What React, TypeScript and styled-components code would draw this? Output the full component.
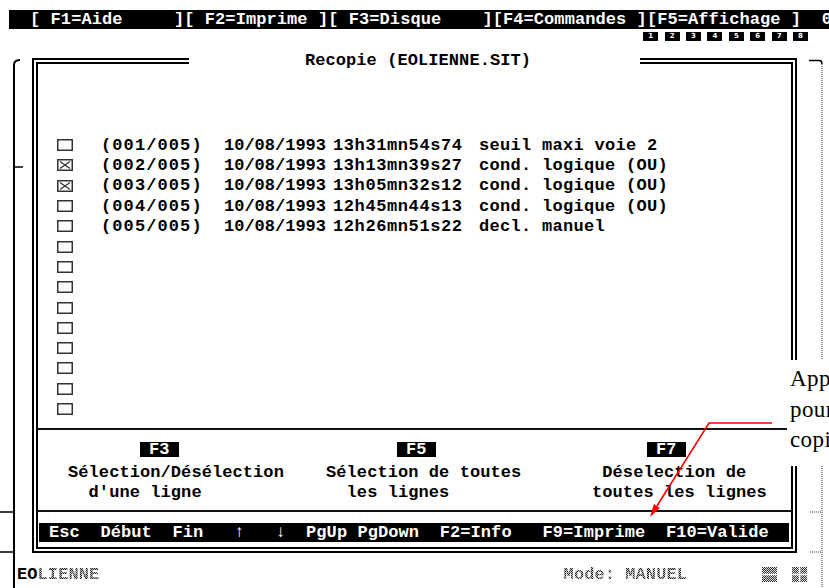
import React from "react";
import styled, { createGlobalStyle } from "styled-components";

const entries = [
  { id: "(001/005)", date: "10/08/1993", time: "13h31mn54s74", label: "seuil maxi voie 2", checked: false },
  { id: "(002/005)", date: "10/08/1993", time: "13h13mn39s27", label: "cond. logique (OU)", checked: true },
  { id: "(003/005)", date: "10/08/1993", time: "13h05mn32s12", label: "cond. logique (OU)", checked: true },
  { id: "(004/005)", date: "10/08/1993", time: "12h45mn44s13", label: "cond. logique (OU)", checked: false },
  { id: "(005/005)", date: "10/08/1993", time: "12h26mn51s22", label: "decl. manuel", checked: false },
];

const rows = [
  ...entries,
  ...Array.from({ length: 9 }, () => ({ id: "", date: "", time: "", label: "", checked: false })),
];

const fnKeys = [
  { key: "F3", indent: 72, lines: ["Sélection/Désélection", "  d'une ligne"] },
  { key: "F5", indent: 71, lines: ["Sélection de toutes", "  les lignes"] },
  { key: "F7", indent: 55, lines: [" Déselection de", "toutes les lignes"] },
];

const GlobalStyle = createGlobalStyle`
  html, body {
    margin: 0;
    padding: 0;
    background: #fff;
    overflow: hidden;
  }
`;

const Screen = styled.div`
  position: relative;
  width: 829px;
  height: 588px;
  overflow: hidden;
  background: #fff;
  color: #000;
  font-family: "Liberation Mono", "DejaVu Sans Mono", monospace;
  font-size: 17px;
  font-weight: bold;
  letter-spacing: 0.08px;
`;

const MenuBar = styled.div`
  margin: 10px 0 0 9px;
  height: 19px;
  line-height: 19px;
  padding-left: 21px;
  background: #000;
  color: #fff;
  white-space: pre;
`;

const ScreenTabs = styled.div`
  display: flex;
  justify-content: flex-end;
  gap: 6.4px;
  margin-top: 3px;
  padding-right: 21px;
`;

const ScreenTab = styled.span`
  width: 15px;
  height: 9px;
  background: #000;
  color: #fff;
  font-family: "DejaVu Sans", sans-serif;
  font-size: 7px;
  line-height: 9px;
  text-align: center;
  letter-spacing: 0;
`;

const Main = styled.div`
  display: flex;
  margin-top: 10px;
`;

const Rail = styled.svg`
  flex: none;
  overflow: visible;
`;

const Center = styled.div`
  flex: none;
  width: 792px;
`;

const Frame = styled.fieldset`
  box-sizing: border-box;
  width: 765px;
  min-width: 0;
  margin: 0 0 0 16px;
  padding: 0;
  border: 6px double #000;
`;

const Title = styled.legend`
  margin: 0 auto;
  padding: 0 109px 0 116px;
  line-height: 19px;
  white-space: pre;
`;

const List = styled.div`
  padding-top: 65px;
`;

const Row = styled.div`
  display: grid;
  grid-template-columns: 44px 123px 109px 146px 1fr;
  align-items: center;
  height: 20.3px;
  padding-left: 19px;
  white-space: pre;

  svg {
    display: block;
  }
`;

const Cell = styled.span<{ $track: number }>`
  letter-spacing: ${(p) => p.$track}px;
`;

const Divider = styled.div<{ $gap: number }>`
  height: 2px;
  margin-top: ${(p) => p.$gap}px;
  background: #111;
`;

const FnRow = styled.div`
  display: grid;
  grid-template-columns: 258px 266px 1fr;
  padding: 12px 0 7px 30px;
`;

const FnBlock = styled.div`
  display: flex;
  flex-direction: column;
  align-items: flex-start;
`;

const KeyCap = styled.span<{ $indent: number }>`
  margin-left: ${(p) => p.$indent}px;
  height: 15px;
  line-height: 15px;
  padding: 0 9px;
  background: #000;
  color: #fff;
`;

const FnText = styled.div`
  margin-top: 6px;
  line-height: 20px;
  white-space: pre;
`;

const KeyBar = styled.div`
  margin: 11px 2px 5px 1px;
  height: 19px;
  line-height: 19px;
  padding-left: 10px;
  background: #000;
  color: #fff;
  white-space: pre;
`;

const StatusBar = styled.div`
  display: flex;
  align-items: center;
  height: 20px;
  margin-top: 11px;
  padding: 0 1px 0 1px;
  white-space: pre;
`;

const Dither = styled.span`
  color: transparent;
  background: repeating-conic-gradient(#222 0% 25%, #bbb 0% 50%) 0 0 / 2px 2px;
  -webkit-background-clip: text;
  background-clip: text;
`;

const Mode = styled(Dither)`
  margin-left: auto;
`;

const Indicators = styled.div`
  display: flex;
  gap: 15px;
  margin-left: 75px;

  svg {
    display: block;
  }
`;

const Note = styled.div`
  position: absolute;
  left: 787px;
  top: 360px;
  width: 42px;
  height: 106px;
  box-sizing: border-box;
  padding: 4px 0 0 3px;
  overflow: hidden;
  background: #fff;
  color: #000;
  font-family: "Liberation Serif", "Times New Roman", serif;
  font-size: 23px;
  font-weight: normal;
  letter-spacing: 0.4px;
  line-height: 30.5px;
  white-space: nowrap;
`;

const Overlay = styled.svg`
  position: absolute;
  left: 0;
  top: 0;
  pointer-events: none;
`;

const Checkbox = ({ checked }: { checked: boolean }) => (
  <svg width="16" height="12" viewBox="0 0 16 12">
    <rect x="0.75" y="0.75" width="14.5" height="10.5" fill="none" stroke="#333" strokeWidth="1.5" />
    {checked && <path d="M3 2.5 L13 9.5 M13 2.5 L3 9.5" stroke="#333" strokeWidth="1.3" />}
  </svg>
);

const Indicator = ({ id, cross }: { id: string; cross?: boolean }) => (
  <svg width="15" height="15" viewBox="0 0 15 15">
    <defs>
      <pattern id={id} width="2" height="2" patternUnits="userSpaceOnUse">
        <rect width="2" height="2" fill="#ddd" />
        <rect width="1" height="1" fill="#333" />
        <rect x="1" y="1" width="1" height="1" fill="#333" />
      </pattern>
    </defs>
    <rect width="15" height="15" fill={`url(#${id})`} />
    <path d="M0 7.5 H15" stroke="#fff" strokeWidth="1.5" />
    {cross && <path d="M7.5 0 V15" stroke="#fff" strokeWidth="1.5" />}
  </svg>
);

const App = () => {
  return (
    <Screen>
      <GlobalStyle />
      <MenuBar>{"[ F1=Aide     ][ F2=Imprime ][ F3=Disque    ][F4=Commandes ][F5=Affichage ]  0"}</MenuBar>
      <ScreenTabs>
        {["1", "2", "3", "4", "5", "6", "7", "8"].map((n) => (
          <ScreenTab key={n}>{n}</ScreenTab>
        ))}
      </ScreenTabs>

      <Main>
        <Rail width="16" height="537" viewBox="0 0 16 537">
          <path d="M14 537 V14 Q14 9 20 9" fill="none" stroke="#000" strokeWidth="2" />
          <path d="M14 116 H23 M0 461 H14 M0 501 H14" stroke="#000" strokeWidth="1.5" />
        </Rail>

        <Center>
          <Frame>
            <Title>Recopie (EOLIENNE.SIT)</Title>
            <List>
              {rows.map((r, i) => (
                <Row key={i}>
                  <Checkbox checked={r.checked} />
                  <Cell $track={1.1}>{r.id}</Cell>
                  <Cell $track={0}>{r.date}</Cell>
                  <Cell $track={0.6}>{r.time}</Cell>
                  <Cell $track={0.3}>{r.label}</Cell>
                </Row>
              ))}
            </List>
            <Divider $gap={9} />
            <FnRow>
              {fnKeys.map((f) => (
                <FnBlock key={f.key}>
                  <KeyCap $indent={f.indent}>{f.key}</KeyCap>
                  <FnText>{f.lines.join("\n")}</FnText>
                </FnBlock>
              ))}
            </FnRow>
            <Divider $gap={0} />
            <KeyBar>{"Esc  Début  Fin   ↑   ↓  PgUp PgDown  F2=Info   F9=Imprime  F10=Valide"}</KeyBar>
          </Frame>

          <StatusBar>
            <span>
              EO<Dither>LIENNE</Dither>
            </span>
            <Mode>Mode: MANUEL</Mode>
            <Indicators>
              <Indicator id="ind-a" />
              <Indicator id="ind-b" cross />
            </Indicators>
          </StatusBar>
        </Center>

        <Rail width="21" height="537" viewBox="0 0 21 537">
          <path d="M1 9.5 H11 Q14 9.5 14 13" fill="none" stroke="#000" strokeWidth="1.5" />
          <path d="M14 13 V537 M2 461 H14 M2 501 H14" stroke="#777" strokeWidth="1.5" strokeDasharray="1 1" />
        </Rail>
      </Main>

      <Note>
        <div>Appuyer sur F9</div>
        <div>pour lancer la</div>
        <div>copie</div>
      </Note>

      <Overlay width="829" height="588" viewBox="0 0 829 588">
        <polyline points="772,423 709,423 656.9,506" fill="none" stroke="#f00" strokeWidth="1.6" />
        <polygon points="650,517 659.9,507.9 653.9,504.1" fill="#f00" />
      </Overlay>
    </Screen>
  );
};

export default App;
